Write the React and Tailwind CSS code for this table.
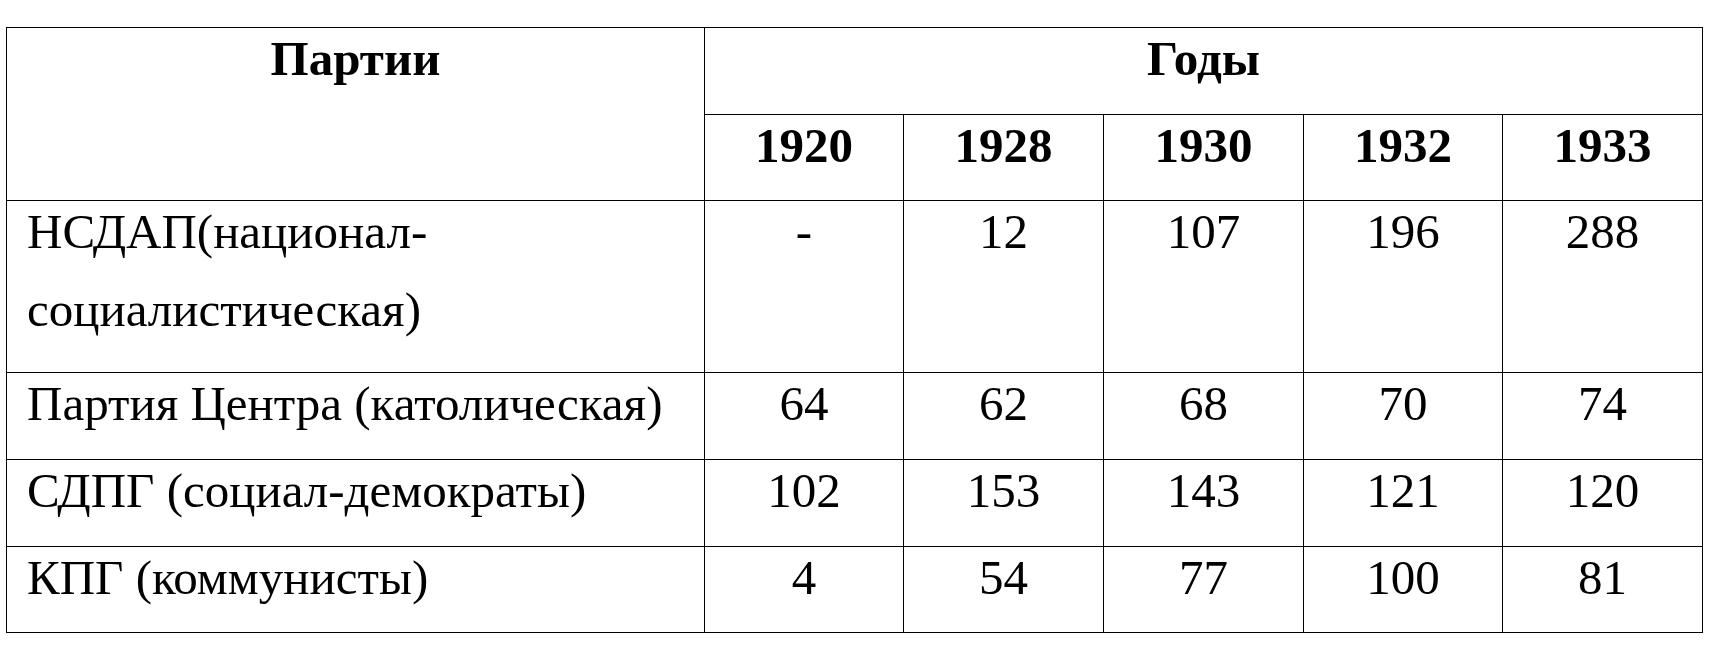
import React from "react";

const rows = [
  { name: "НСДАП(национал-социалистическая)", vals: ["-", "12", "107", "196", "288"] },
  { name: "Партия Центра (католическая)", vals: ["64", "62", "68", "70", "74"] },
  { name: "СДПГ (социал-демократы)", vals: ["102", "153", "143", "121", "120"] },
  { name: "КПГ (коммунисты)", vals: ["4", "54", "77", "100", "81"] },
];

const years = ["1920", "1928", "1930", "1932", "1933"];

export default function App() {
  return (
    <div
      className="w-[1713px] h-[656px] bg-white pl-[6px] pt-[27px] text-black"
      style={{ fontFamily: '"Liberation Serif", "Times New Roman", serif' }}
    >
      <div className="grid w-[1697px] grid-cols-[697px_198px_199px_199px_198px_199px] grid-rows-[86px_85px_171px_86px_86px_85px] gap-px border border-black bg-black text-[49px] leading-[78px]">
        <div className="row-span-2 bg-white text-center font-bold">
          <div className="-mt-[8px]">Партии</div>
        </div>
        <div className="col-span-5 bg-white text-center font-bold">
          <div className="-mt-[8px]">Годы</div>
        </div>
        {years.map((y) => (
          <div key={y} className="bg-white text-center font-bold">
            <div className="-mt-[8px]">{y}</div>
          </div>
        ))}
        {rows.map((r) => (
          <React.Fragment key={r.name}>
            <div className="bg-white pl-[20px] pr-[20px]">
              <div className="-mt-[8px]">{r.name}</div>
            </div>
            {r.vals.map((v, i) => (
              <div key={i} className="bg-white text-center">
                <div className="-mt-[8px]">{v}</div>
              </div>
            ))}
          </React.Fragment>
        ))}
      </div>
    </div>
  );
}
